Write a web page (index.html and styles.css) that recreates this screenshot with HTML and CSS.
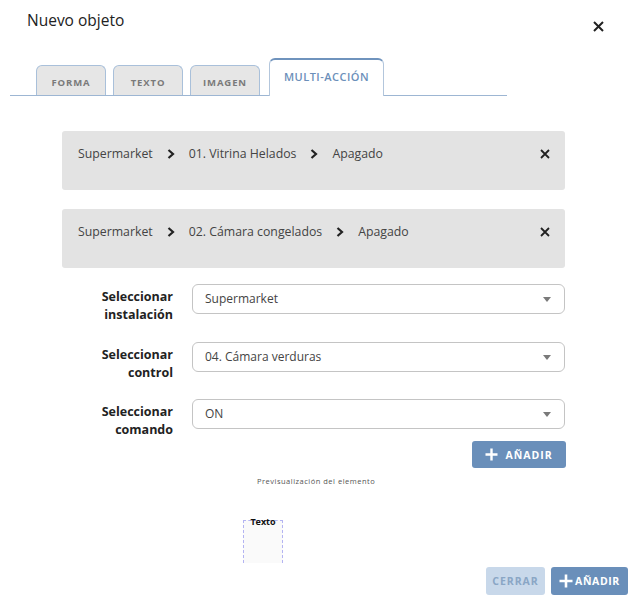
FILE: index.html
```html
<!DOCTYPE html>
<html lang="es">
<head>
    <meta charset="UTF-8">
    <meta name="viewport" content="width=device-width, initial-scale=1.0">
    <title>Nuevo objeto</title>
    <link rel="stylesheet" href="styles.css">
</head>
<body>
    <div class="modal">
        <div class="modal-header">
            <h1 class="modal-title">Nuevo objeto</h1>
            <button class="close-btn" aria-label="Cerrar">
                <svg width="11" height="11" viewBox="0 0 11 11"><path d="M1 1L10 10M10 1L1 10" stroke="#222" stroke-width="2"/></svg>
            </button>
        </div>

        <div class="tabs">
            <div class="tab">FORMA</div>
            <div class="tab">TEXTO</div>
            <div class="tab">IMAGEN</div>
            <div class="tab active">MULTI-ACCIÓN</div>
        </div>

        <div class="content">
            <div class="action-card">
                <div class="crumbs">
                    <span>Supermarket</span>
                    <svg class="chev" width="8" height="10" viewBox="0 0 8 10"><path d="M1.5 1L6 5L1.5 9" stroke="#222" stroke-width="2.2" fill="none"/></svg>
                    <span>01. Vitrina Helados</span>
                    <svg class="chev" width="8" height="10" viewBox="0 0 8 10"><path d="M1.5 1L6 5L1.5 9" stroke="#222" stroke-width="2.2" fill="none"/></svg>
                    <span>Apagado</span>
                </div>
                <svg class="remove" width="10" height="10" viewBox="0 0 10 10"><path d="M1 1L9 9M9 1L1 9" stroke="#222" stroke-width="1.8"/></svg>
            </div>

            <div class="action-card">
                <div class="crumbs">
                    <span>Supermarket</span>
                    <svg class="chev" width="8" height="10" viewBox="0 0 8 10"><path d="M1.5 1L6 5L1.5 9" stroke="#222" stroke-width="2.2" fill="none"/></svg>
                    <span>02. Cámara congelados</span>
                    <svg class="chev" width="8" height="10" viewBox="0 0 8 10"><path d="M1.5 1L6 5L1.5 9" stroke="#222" stroke-width="2.2" fill="none"/></svg>
                    <span>Apagado</span>
                </div>
                <svg class="remove" width="10" height="10" viewBox="0 0 10 10"><path d="M1 1L9 9M9 1L1 9" stroke="#222" stroke-width="1.8"/></svg>
            </div>

            <div class="form-grid">
                <label class="field-label">Seleccionar instalación</label>
                <div class="select">Supermarket<span class="caret"></span></div>

                <label class="field-label">Seleccionar control</label>
                <div class="select">04. Cámara verduras<span class="caret"></span></div>

                <label class="field-label">Seleccionar comando</label>
                <div class="select">ON<span class="caret"></span></div>
            </div>

            <div class="add-row">
                <button class="btn btn-primary">
                    <svg width="13" height="13" viewBox="0 0 13 13"><path d="M6.5 0.5V12.5M0.5 6.5H12.5" stroke="#fff" stroke-width="2.4"/></svg>
                    AÑADIR
                </button>
            </div>
        </div>

        <div class="preview">
            <p class="preview-title">Previsualización del elemento</p>
            <div class="preview-box">Texto</div>
        </div>

        <div class="modal-footer">
            <button class="btn btn-light">CERRAR</button>
            <button class="btn btn-primary btn-tight">
                <svg width="14" height="14" viewBox="0 0 14 14"><path d="M7 0.5V13.5M0.5 7H13.5" stroke="#fff" stroke-width="2.6"/></svg>AÑADIR
            </button>
        </div>
    </div>
</body>
</html>
```

FILE: styles.css
```css
/* styles.css */

body {
    margin: 0;
    background-color: #fff;
    font-family: "Open Sans", Arial, sans-serif;
    color: #333;
}

.modal {
    width: 636px;
    height: 600px;
    position: relative;
    overflow: hidden;
}

.modal-header {
    display: flex;
    justify-content: space-between;
    align-items: flex-start;
    padding: 9px 32px 0 27px;
    height: 58px;
    box-sizing: border-box;
}

.modal-title {
    margin: 0;
    font-size: 15.5px;
    font-weight: 500;
    color: #222;
}

.close-btn {
    background: none;
    border: none;
    padding: 0;
    margin-top: 11px;
    cursor: pointer;
}

/* tabs */

.tabs {
    display: flex;
    align-items: flex-end;
    gap: 7px;
    margin: 0 129px 0 10px;
    padding-left: 26px;
    border-bottom: 1px solid #9db6d3;
    height: 37px;
}

.tab {
    height: 30px;
    box-sizing: border-box;
    background-color: #e6e6e6;
    border: 1px solid #a9c0da;
    border-bottom: none;
    border-radius: 6px 6px 0 0;
    font-size: 9.5px;
    font-weight: 700;
    letter-spacing: 0.9px;
    color: #7a7a7a;
    display: flex;
    align-items: center;
    justify-content: center;
    padding-top: 3px;
    white-space: nowrap;
}

.tab:nth-child(1) { width: 70px; }
.tab:nth-child(2) { width: 70px; }
.tab:nth-child(3) { width: 70px; }

.tab.active {
    height: 38px;
    width: 115px;
    margin-bottom: -1px;
    margin-left: 2px;
    background-color: #fff;
    border: 1px solid #b3c6dc;
    border-top: 2px solid #6f93bd;
    border-bottom: none;
    color: #6c8fba;
    font-size: 11px;
    font-weight: 600;
    letter-spacing: 0.5px;
    align-items: flex-start;
    padding-top: 9px;
}

/* body */

.content {
    margin: 35px 71px 0 62px;
}

.action-card {
    display: flex;
    justify-content: space-between;
    align-items: flex-start;
    height: 59px;
    box-sizing: border-box;
    padding: 14px 15px 0 16px;
    background-color: #e3e3e3;
    border-radius: 3px;
    margin-bottom: 19px;
}

.crumbs {
    display: flex;
    align-items: center;
    gap: 13px;
    font-size: 12.3px;
    color: #444;
    line-height: 18px;
}

.chev {
    margin: 0 1px;
}

.remove {
    margin-top: 4px;
}

.form-grid {
    display: grid;
    grid-template-columns: 111px 1fr;
    column-gap: 19px;
    row-gap: 17.5px;
    margin-top: -3px;
}

.field-label {
    text-align: right;
    font-size: 12.5px;
    font-weight: 700;
    color: #222;
    line-height: 18px;
    padding-top: 4px;
}

.select {
    position: relative;
    height: 30px;
    box-sizing: border-box;
    border: 1px solid #c4c4c4;
    border-radius: 6px;
    padding: 0 12px;
    font-size: 12px;
    color: #444;
    line-height: 28px;
}

.caret {
    position: absolute;
    right: 13px;
    top: 12px;
    border-left: 4.5px solid transparent;
    border-right: 4.5px solid transparent;
    border-top: 5px solid #7a7a7a;
}

.add-row {
    display: flex;
    justify-content: flex-end;
    margin-top: 2px;
    margin-right: -1px;
}

/* buttons */

.btn {
    border: none;
    border-radius: 3px;
    font-family: "Open Sans", Arial, sans-serif;
    font-size: 10.5px;
    font-weight: 700;
    letter-spacing: 1px;
    display: inline-flex;
    align-items: center;
    justify-content: center;
    gap: 7px;
    cursor: pointer;
}

.add-row .btn {
    width: 94px;
    height: 27px;
}

.btn-primary {
    background-color: #6a8fba;
    color: #fff;
}

.btn-light {
    background-color: #c8d8ea;
    color: #8aa6c5;
}

.btn-tight {
    gap: 2px;
    letter-spacing: 0.6px;
}

/* preview */

.preview {
    padding-left: 243px;
}

.preview-title {
    margin: 8px 0 0 14px;
    font-size: 7.5px;
    letter-spacing: 0.5px;
    color: #555;
}

.preview-box {
    width: 40px;
    height: 43px;
    box-sizing: border-box;
    margin-top: 34px;
    border: 1px dashed #b4b4f2;
    border-bottom: none;
    background-color: #fafafa;
    font-size: 9px;
    font-weight: 700;
    color: #111;
    text-align: center;
    line-height: 0;
    padding-top: 1px;
}

.modal-footer {
    position: absolute;
    right: 8px;
    bottom: 5px;
    display: flex;
    gap: 6px;
}

.modal-footer .btn {
    height: 28px;
}

.modal-footer .btn-light {
    width: 59px;
}

.modal-footer .btn-primary {
    width: 77px;
}
```
